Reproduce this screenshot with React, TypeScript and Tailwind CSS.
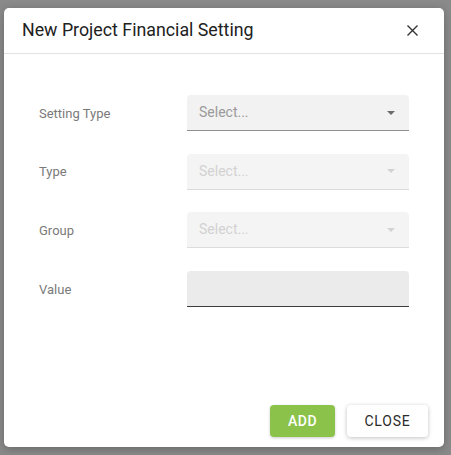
import React from "react";

const FONT = { fontFamily: "Roboto, 'Liberation Sans', sans-serif" };

function Caret({ color }: { color: string }) {
  return (
    <svg width="8" height="4" viewBox="0 0 8 4" className="shrink-0">
      <path d="M0 0 L8 0 L4 4 Z" fill={color} />
    </svg>
  );
}

function SelectField({ disabled }: { disabled?: boolean }) {
  return (
    <div
      className={`flex h-[36px] w-[222px] items-center justify-between rounded-t-[4px] border-b pl-[12px] pr-[14px] ${
        disabled ? "border-[#dcdcdc] bg-[#f4f4f4]" : "border-[#8f8f8f] bg-[#f2f2f2]"
      }`}
    >
      <span className={`text-[14px] ${disabled ? "text-[#d2d2d2]" : "text-[#9a9a9a]"}`}>Select...</span>
      <Caret color={disabled ? "#d2d2d2" : "#6b6b6b"} />
    </div>
  );
}

function Row({ label, children }: { label: string; children: React.ReactNode }) {
  return (
    <div className="flex items-center">
      <div className="w-[148px] pt-[1px] text-[13px] text-[#7a7a7a]">{label}</div>
      {children}
    </div>
  );
}

export default function App() {
  return (
    <div className="h-[455px] w-[451px] bg-[#8a8a8a] pl-[4px] pt-[8px]" style={FONT}>
      <div className="flex h-[439px] w-[440px] flex-col rounded-[5px] bg-white shadow-[0_2px_8px_rgba(0,0,0,0.25)]">
        <div className="flex h-[46px] shrink-0 items-center justify-between border-b border-[#e3e3e3] pl-[18px] pr-[26px]">
          <span className="text-[17.8px] text-[#212121]">New Project Financial Setting</span>
          <svg width="11" height="11" viewBox="0 0 11 11">
            <path d="M0.5 0.5 L10.5 10.5 M10.5 0.5 L0.5 10.5" stroke="#333" strokeWidth="1.4" />
          </svg>
        </div>

        <div className="flex flex-col gap-[22.7px] pl-[35px] pt-[41px]">
          <Row label="Setting Type">
            <SelectField />
          </Row>
          <Row label="Type">
            <SelectField disabled />
          </Row>
          <Row label="Group">
            <SelectField disabled />
          </Row>
          <Row label="Value">
            <div className="h-[36px] w-[222px] rounded-t-[4px] border-b border-[#3c3c3c] bg-[#ebebeb]" />
          </Row>
        </div>

        <div className="mt-auto flex justify-end gap-[12px] pb-[10px] pr-[16px]">
          <button className="h-[32px] w-[65px] rounded-[4px] bg-[#8bc34a] text-[14px] font-medium tracking-[0.5px] text-white shadow-[0_1px_3px_rgba(0,0,0,0.2)]">
            ADD
          </button>
          <button className="h-[32px] w-[81px] rounded-[4px] bg-white text-[14px] tracking-[0.8px] text-[#2a2a2a] shadow-[0_1px_4px_rgba(0,0,0,0.25)]">
            CLOSE
          </button>
        </div>
      </div>
    </div>
  );
}
